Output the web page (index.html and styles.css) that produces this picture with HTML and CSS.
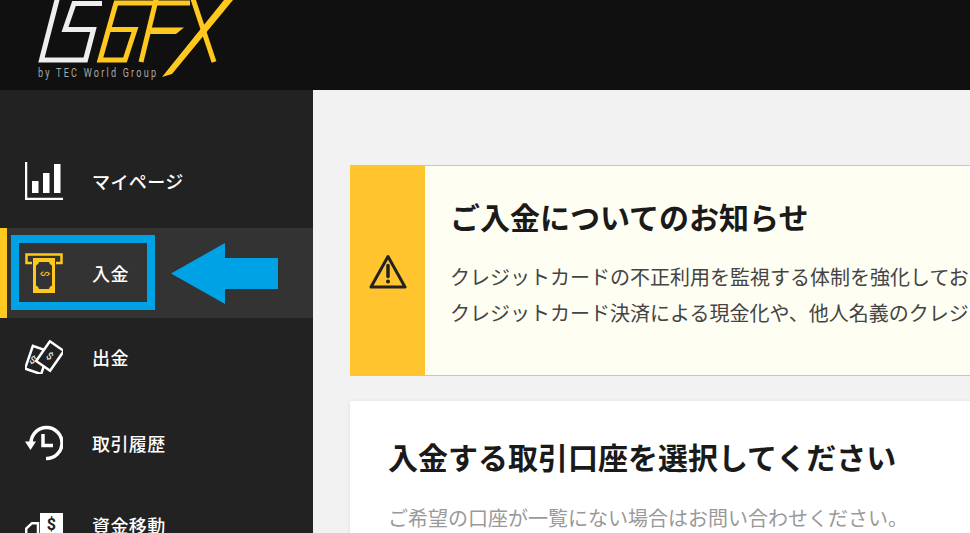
FILE: index.html
```html
<!DOCTYPE html>
<html lang="ja">
<head>
<meta charset="utf-8">
<title>入金</title>
<link rel="stylesheet" href="styles.css">
</head>
<body>
<header class="header">
  <svg class="logo" width="240" height="90" viewBox="0 0 240 90">
    <g class="logo-white">
      <path d="M58 -4 L41.500 60 H85.500 L93.500 29.500 H65 L74 3.500 H102"/>
    </g>
    <g class="logo-yellow">
      <path d="M116 3 L100 60 H125 L135 29.500 H110"/>
      <path d="M114 3 H190"/>
      <path d="M157 -4 L141 62"/>
      <path d="M192 -4 L214 62"/>
    </g>
    <polygon class="logo-fill" points="151,27.500 184,27.500 176,34 150,34"/>
    <polygon class="logo-fill" points="224,0 233,0 172,74 162,77"/>
    <text class="logo-text" x="54.300" y="77" textLength="168.600" transform="scale(0.7 1)">by TEC World Group</text>
  </svg>
</header>
<div class="layout">
  <nav class="sidebar">
    <a class="item">
      <svg class="icon" width="38" height="38" viewBox="0 0 38 38">
        <path class="st-white no-fill" d="M1 0 V37 H38" stroke-width="2.500"/>
        <path class="fill-white" d="M7 19 H13.500 V31 H7 Z M18 11 H24.500 V31 H18 Z M29 2 H35.500 V31 H29 Z"/>
      </svg>
      <span>マイページ</span>
    </a>
    <a class="item active">
      <svg class="icon" width="38" height="40" viewBox="0 0 38 40">
        <path class="st-yellow no-fill" d="M7 10 H1.500 V1.500 H36.500 V10 H31" stroke-width="2.500"/>
        <path class="fill-yellow" d="M8 5 H30 V40 H8 Z"/>
        <path class="fill-dark" d="M14 9 H24 Q24.500 12 27 12.500 V32.500 Q24.500 33 24 36 H14 Q13.500 33 11 32.500 V12.500 Q13.500 12 14 9 Z"/>
        <text class="dollar-y" x="19" y="24.500" text-anchor="middle" transform="rotate(90 19 21)">$</text>
      </svg>
      <span>入金</span>
    </a>
    <a class="item">
      <svg class="icon" width="38" height="34" viewBox="0 0 38 34">
        <rect class="st-white no-fill" x="3.500" y="8" width="17" height="24" transform="rotate(19 12 20)" stroke-width="2.500"/>
        <text class="dollar-w" x="8" y="23.500" text-anchor="middle" transform="rotate(19 8 20)">$</text>
        <rect class="bill-front" x="16.500" y="4" width="17" height="24" transform="rotate(35 25 16)" stroke-width="2.500"/>
        <text class="dollar-w" x="25" y="19.500" text-anchor="middle" transform="rotate(35 25 16)">$</text>
      </svg>
      <span>出金</span>
    </a>
    <a class="item">
      <svg class="icon" width="38" height="36" viewBox="0 0 38 36">
        <path class="st-white no-fill" d="M6 18 A15.500 15.500 0 1 1 21 33.500" stroke-width="3.500"/>
        <path class="fill-white" d="M0 16.500 H11 L5.500 25 Z"/>
        <path class="st-white no-fill" d="M18 9 V20.500 H28" stroke-width="3.500"/>
      </svg>
      <span>取引履歴</span>
    </a>
    <a class="item last">
      <svg class="icon" width="38" height="38" viewBox="0 -7 38 38">
        <rect class="fill-white" x="15" y="0" width="23" height="31"/>
        <text class="dollar-d" x="26.500" y="16.500" text-anchor="middle">$</text>
        <path class="st-white no-fill" d="M1.200 31 V15.500 L7 10.200 H13 V31" stroke-width="2.500"/>
      </svg>
      <span>資金移動</span>
    </a>
    <div class="pointer-box"></div>
    <svg class="pointer-arrow" width="108" height="62" viewBox="0 0 108 62">
      <path class="fill-blue" d="M0 30.500 L54 0 V15 H107 V46 H54 V61 Z"/>
    </svg>
  </nav>
  <main class="main">
    <section class="alert">
      <div class="alert-side">
        <svg width="38" height="36" viewBox="0 0 38 36">
          <path class="warn" d="M19 2.500 L36 33 H2 Z"/>
          <path class="warn warn-bar" d="M19 11.500 V22.500"/>
          <circle class="warn-dot" cx="19" cy="27.500" r="2"/>
        </svg>
      </div>
      <div class="alert-body">
        <h2 class="heading">ご入金についてのお知らせ</h2>
        <p class="alert-text">クレジットカードの不正利用を監視する体制を強化してお</p>
        <p class="alert-text">クレジットカード決済による現金化や、他人名義のクレジ</p>
      </div>
    </section>
    <section class="card">
      <h2 class="heading">入金する取引口座を選択してください</h2>
      <p class="card-text">ご希望の口座が一覧にない場合はお問い合わせください。</p>
    </section>
  </main>
</div>
</body>
</html>
```
FILE: styles.css
```css
* { box-sizing: border-box; }
html, body { margin: 0; height: 100%; overflow: hidden; }
body {
  display: flex;
  flex-direction: column;
  background: #f2f2f2;
  font-family: "Noto Sans CJK JP", "Noto Sans", sans-serif;
}
.header { flex: 0 0 90px; background: #101010; overflow: hidden; }
.logo { display: block; overflow: hidden; }
.logo-white path { fill: none; stroke: #eeeeee; stroke-width: 5; }
.logo-yellow path { fill: none; stroke: #ffc81e; stroke-width: 5; }
.logo-fill { fill: #ffc81e; }
.logo-text { fill: #a8a8a8; font: 400 13px "Roboto", sans-serif; }

.layout { flex: 1; display: flex; min-height: 0; }
.sidebar {
  position: relative;
  flex: 0 0 313px;
  padding-top: 48px;
  background: #222222;
  overflow: hidden;
}
.item {
  display: flex;
  align-items: center;
  gap: 30px;
  height: 86px;
  padding-left: 25px;
  color: #ffffff;
  font-size: 18px;
  font-weight: 500;
  letter-spacing: 0.4px;
}
.item span { margin-left: -1px; }
.icon { flex: 0 0 38px; display: block; }
.item.active {
  height: 90px;
  margin: 4px 0 -4px;
  padding-left: 18px;
  background: #333333;
  border-left: 7px solid #ffc81e;
}
.item.last { margin-top: -4px; }

.no-fill { fill: none; }
.st-white { stroke: #ffffff; }
.st-yellow { stroke: #ffc81e; }
.fill-white { fill: #ffffff; }
.fill-yellow { fill: #ffc81e; }
.fill-dark { fill: #333333; }
.fill-blue { fill: #00a2e6; }
.bill-front { stroke: #ffffff; fill: #222222; }
.dollar-y { fill: #ffc81e; font: 400 10px "Roboto", sans-serif; }
.dollar-w { fill: #ffffff; font: 400 10px "Roboto", sans-serif; }
.dollar-d { fill: #222222; font: 700 16px "Roboto", sans-serif; }

.pointer-box {
  position: absolute;
  left: 11px;
  top: 145px;
  width: 144px;
  height: 75px;
  border: 8px solid #00a2e6;
}
.pointer-arrow { position: absolute; left: 171px; top: 153px; }

.main {
  flex: 1;
  min-width: 0;
  padding: 75px 0 0 37px;
  overflow: hidden;
}
.alert {
  display: flex;
  width: 900px;
  height: 211px;
  background: #fffef2;
  border: 1px solid #ffc42e;
}
.alert-side {
  flex: 0 0 74px;
  display: flex;
  align-items: center;
  justify-content: center;
  padding-top: 2px;
  background: #ffc42e;
}
.warn {
  fill: none;
  stroke: #222222;
  stroke-width: 3;
  stroke-linejoin: round;
}
.warn-bar { stroke-width: 3.500; stroke-linecap: round; }
.warn-dot { fill: #222222; }
.alert-body { padding: 26px 0 0 25px; }
.heading {
  margin: 0;
  color: #1a1a1a;
  font-size: 30px;
  font-weight: 700;
  line-height: 48px;
  white-space: nowrap;
}
.alert-text {
  margin: 0;
  color: #444444;
  font-size: 20px;
  line-height: 36px;
  white-space: nowrap;
}
.alert-body .heading { margin-bottom: 19px; }
.card {
  width: 900px;
  height: 300px;
  margin-top: 25px;
  padding: 31px 0 0 38px;
  background: #ffffff;
  box-shadow: 0 0 4px rgba(0, 0, 0, 0.08);
}
.card-text {
  margin: 20px 0 0;
  color: #999999;
  font-size: 20px;
  line-height: 36px;
  white-space: nowrap;
}
```
